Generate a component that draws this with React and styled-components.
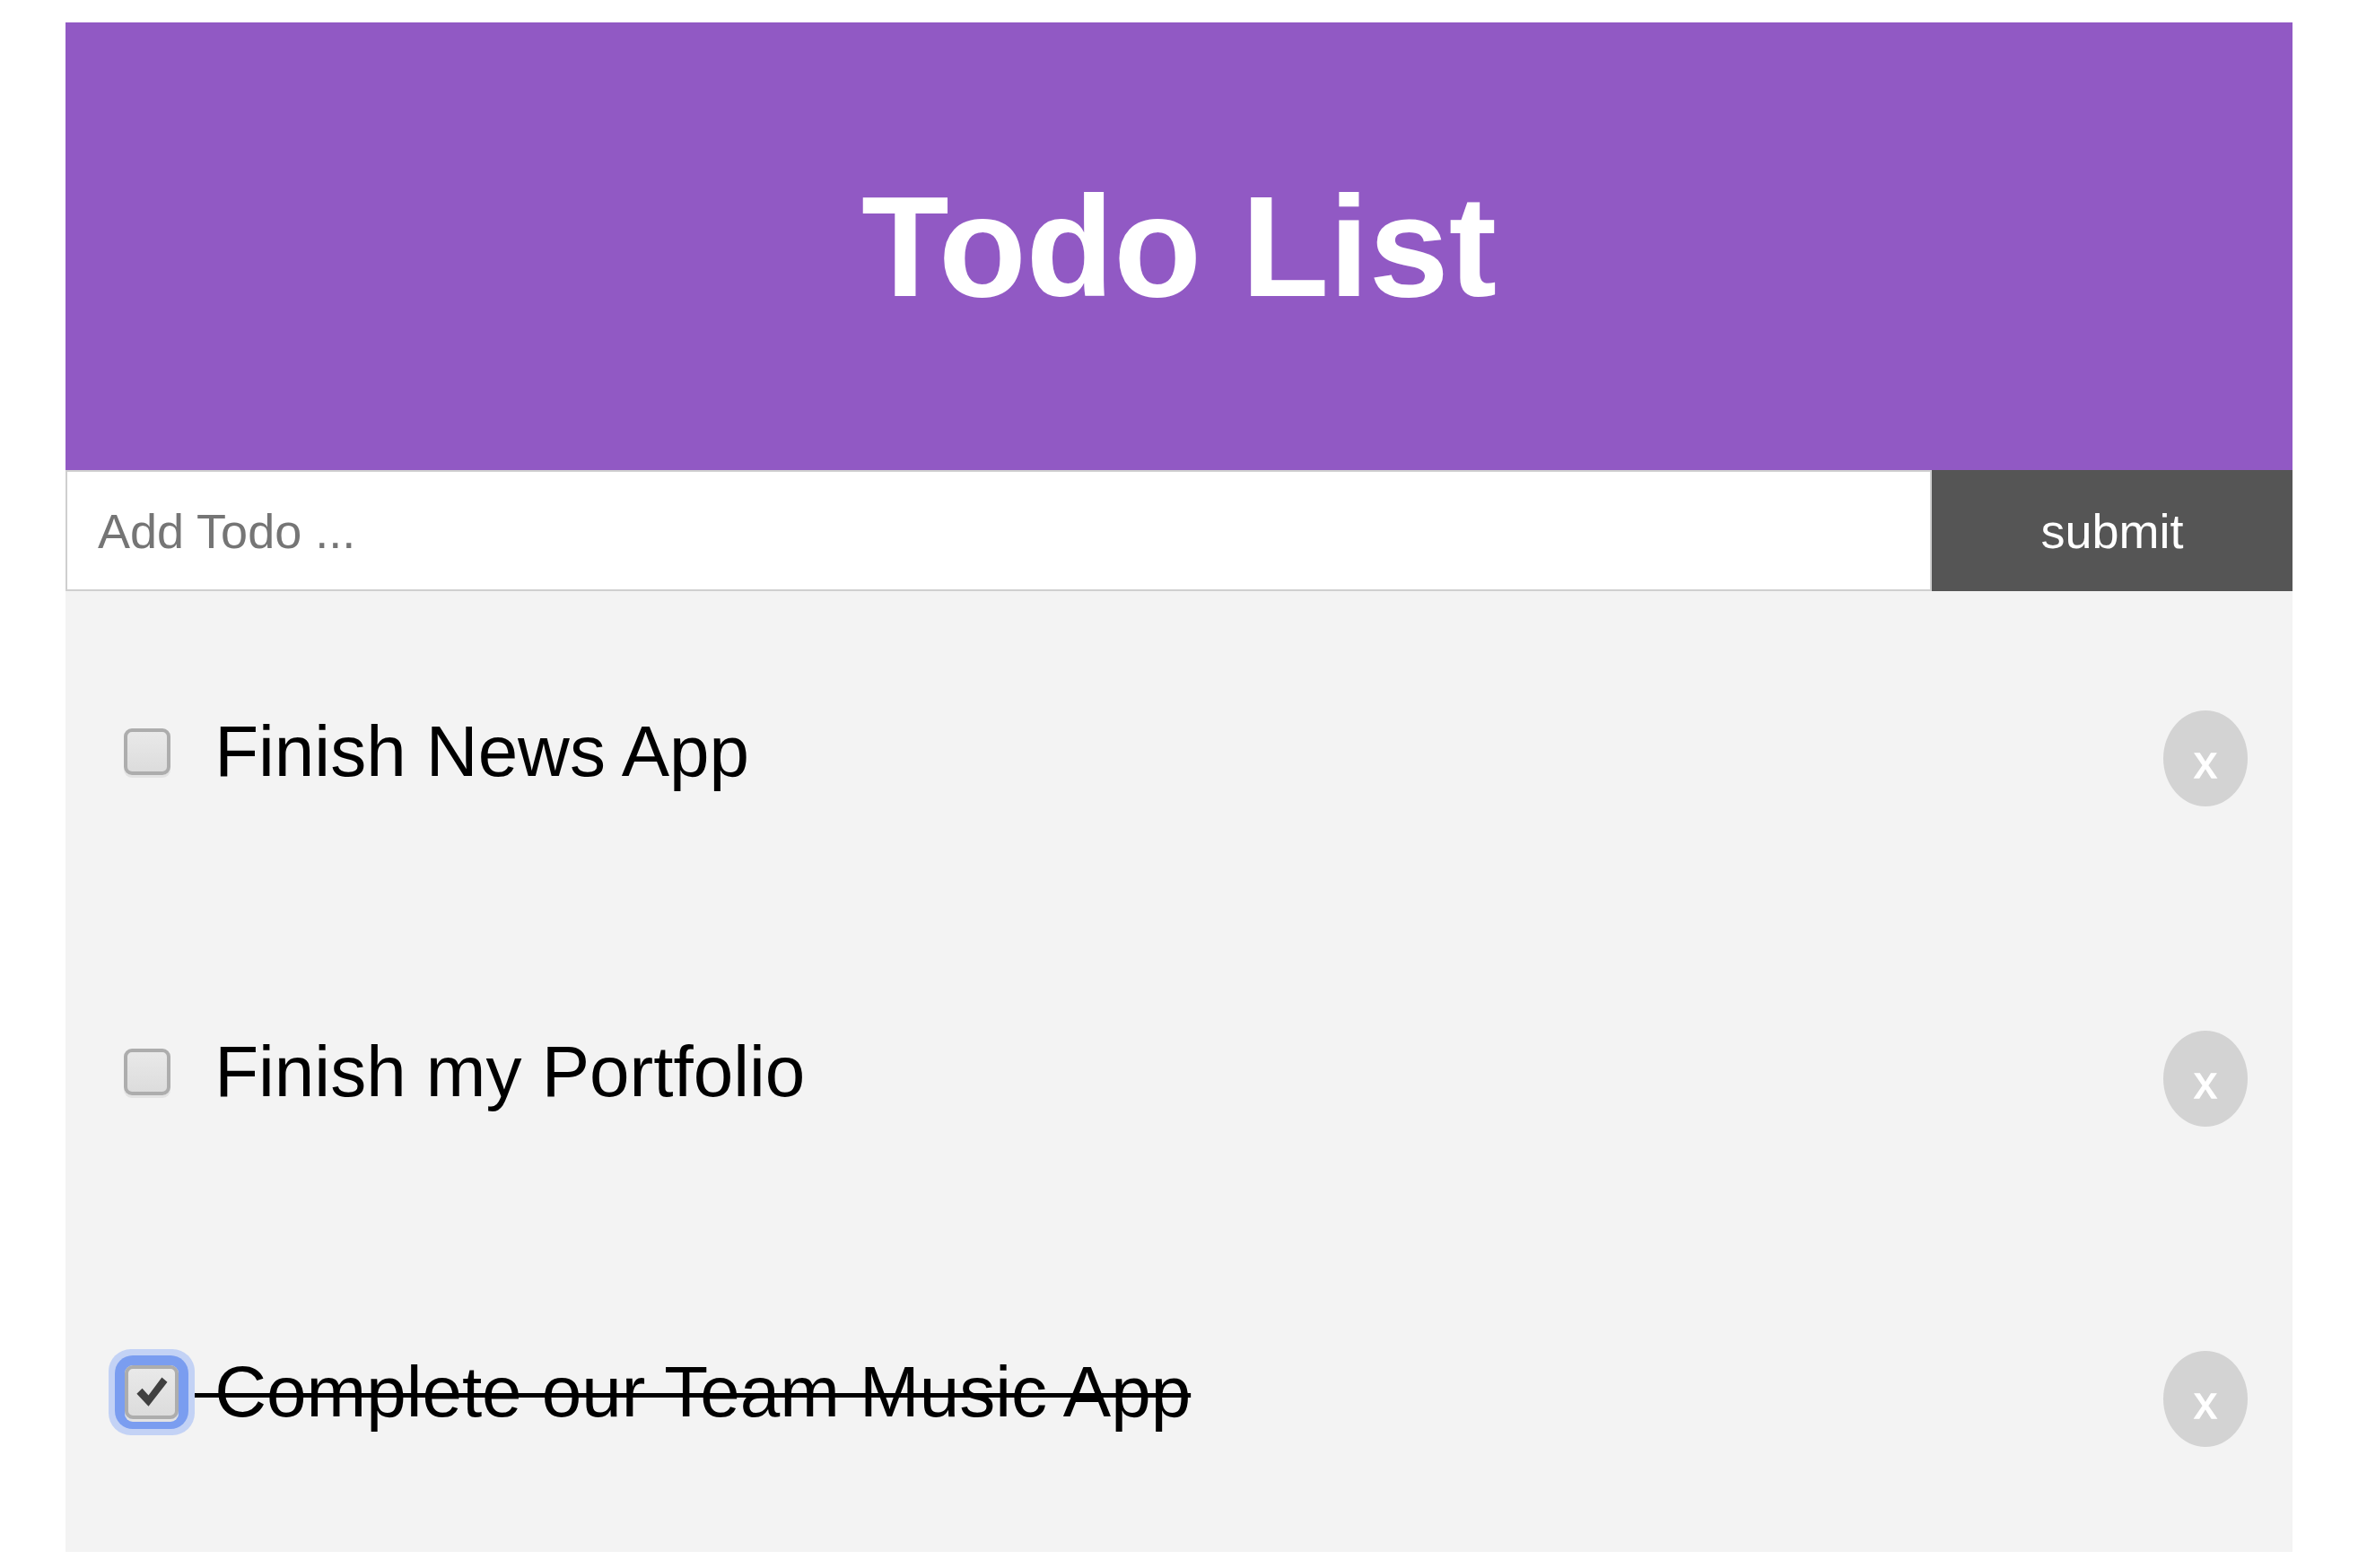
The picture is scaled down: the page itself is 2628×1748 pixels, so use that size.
import React from 'react'
import styled, { createGlobalStyle } from 'styled-components';

const GlobalStyle = createGlobalStyle`
  body {
    margin: 0;
    background: #ffffff;
    font-family: "Liberation Sans", Arial, Helvetica, sans-serif;
  }
`;

const Page = styled.div`
  width: 2482px;
  margin: 25px auto 0;
`;

const Header = styled.header`
  height: 499px;
  background: #9159c4;
  display: flex;
  align-items: center;
  justify-content: center;
`;

const Title = styled.h1`
  margin: 0;
  color: #ffffff;
  font-size: 160px;
  font-weight: bold;
`;

const Form = styled.form`
  display: flex;
  height: 135px;
`;

const TodoInput = styled.input`
  flex: 1;
  box-sizing: border-box;
  height: 100%;
  border: 2px solid #cfcfcf;
  padding: 0 34px;
  font-family: "Liberation Sans", Arial, sans-serif;
  font-size: 54px;
  color: #333;
  outline: none;
  &::placeholder {
    color: #757575;
  }
`;

const SubmitButton = styled.button`
  width: 402px;
  height: 100%;
  border: none;
  background: #555555;
  color: #ffffff;
  font-family: "Liberation Sans", Arial, sans-serif;
  font-size: 54px;
`;

const List = styled.ul`
  margin: 0;
  padding: 0;
  list-style: none;
  background: #f3f3f3;
`;

const Row = styled.li`
  height: 357px;
  display: flex;
  align-items: center;
  padding: 0 50px 0 65px;
`;

// checked one carries the blue focus ring, like the reference
const Check = styled.span`
  box-sizing: border-box;
  width: ${p => p.checked ? 60 : 52}px;
  height: ${p => p.checked ? 60 : 52}px;
  flex: none;
  margin: ${p => p.checked ? '0 18px 0 1px' : '0 27px 0 0'};
  border-radius: 9px;
  border: 4px solid #adadad;
  background: linear-gradient(#e9e9e9, #dcdcdc);
  box-shadow: 0 3px 0 #e3e3e3
    ${p => p.checked ? ', 0 0 0 11px #7a9df0, 0 0 0 18px #c3d2f5' : ''};
  display: flex;
  align-items: center;
  justify-content: center;
`;

const Label = styled.span`
  flex: 1;
  font-size: 80px;
  color: #000;
  white-space: pre;
  text-decoration: ${p => p.done ? 'line-through' : 'none'};
  text-decoration-thickness: 5px;
`;

const DeleteButton = styled.button`
  width: 94px;
  height: 107px;
  margin-top: 16px;
  border: none;
  border-radius: 50%;
  background: #d3d3d3;
  color: #ffffff;
  font-family: "Liberation Sans", Arial, sans-serif;
  font-size: 50px;
  -webkit-text-stroke: 1.5px #ffffff;
  padding: 8px 0 0;
`;

const todos = [
  { id: 1, title: 'Finish News App', completed: false },
  { id: 2, title: 'Finish my Portfolio', completed: false },
  { id: 3, title: 'Complete our Team Music App', completed: true },
];

const App = () => {
  return (
    <Page>
      <GlobalStyle />
      <Header>
        <Title>Todo List</Title>
      </Header>
      <Form onSubmit={e => e.preventDefault()}>
        <TodoInput type="text" placeholder="Add Todo ..." />
        <SubmitButton type="submit">submit</SubmitButton>
      </Form>
      <List>
        {todos.map(todo => (
          <Row key={todo.id}>
            <Check checked={todo.completed}>
              {todo.completed &&
                <svg width="42" height="42" viewBox="0 0 24 24">
                  <path d="M2.5 13 L6 9.5 L10 14 L18.5 2.5 L22 5.5 L10 21 Z" fill="#404040" />
                </svg>
              }
            </Check>
            <Label done={todo.completed}>{'\u00a0' + todo.title}</Label>
            <DeleteButton>x</DeleteButton>
          </Row>
        ))}
      </List>
    </Page>
  )
};

export default App
